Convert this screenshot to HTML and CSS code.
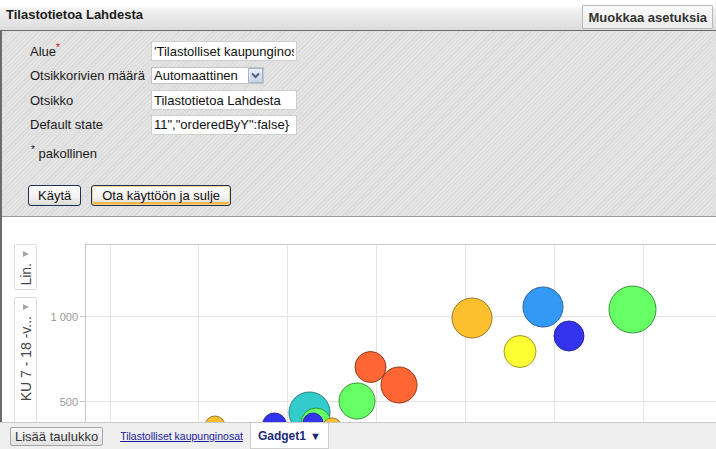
FILE: index.html
```html
<!DOCTYPE html>
<html lang="fi">
<head>
<meta charset="utf-8">
<title>Tilastotietoa Lahdesta</title>
<link rel="stylesheet" href="styles.css">
</head>
<body>
<div class="gadget">
  <header class="titlebar">
    <h1 class="title">Tilastotietoa Lahdesta</h1>
    <button class="edit-btn" type="button">Muokkaa asetuksia</button>
  </header>
  <div class="main">
    <section class="settings">
      <div class="form">
        <label class="lbl">Alue<sup class="req">*</sup></label>
        <div class="field"><input class="txt" type="text" value="'Tilastolliset kaupunginosat'"></div>
        <label class="lbl">Otsikkorivien määrä</label>
        <div class="field">
          <div class="select"><span class="select-val">Automaattinen</span><span class="select-btn"><svg width="9" height="7" viewBox="0 0 9 7"><path d="M1 1.5 L4.5 5 L8 1.5" fill="none" stroke="#4d6185" stroke-width="2"/></svg></span></div>
        </div>
        <label class="lbl">Otsikko</label>
        <div class="field"><input class="txt" type="text" value="Tilastotietoa Lahdesta"></div>
        <label class="lbl">Default state</label>
        <div class="field"><input class="txt" type="text" value='11","orderedByY":false}'></div>
      </div>
      <p class="note"><sup class="star">*</sup> pakollinen</p>
      <div class="actions">
        <button class="btn" type="button">Käytä</button>
        <button class="btn btn-default" type="button">Ota käyttöön ja sulje</button>
      </div>
    </section>
    <section class="chart">
      <div class="side">
        <div class="pill pill-short"><span class="tri"></span><span class="vtext">Lin.</span></div>
        <div class="pill pill-long"><span class="tri"></span><span class="vtext">KU 7 - 18 -v...</span></div>
      </div>
      <svg class="plot" width="676" height="205" viewBox="40 217 676 205">
        <g stroke="#e4e4e4" stroke-width="1">
          <line x1="110.5" y1="244" x2="110.5" y2="422"/>
          <line x1="198.5" y1="244" x2="198.5" y2="422"/>
          <line x1="287.5" y1="244" x2="287.5" y2="422"/>
          <line x1="376.5" y1="244" x2="376.5" y2="422"/>
          <line x1="465.5" y1="244" x2="465.5" y2="422"/>
          <line x1="554.5" y1="244" x2="554.5" y2="422"/>
          <line x1="643.5" y1="244" x2="643.5" y2="422"/>
          <line x1="85" y1="316.5" x2="716" y2="316.5"/>
          <line x1="85" y1="401.5" x2="716" y2="401.5"/>
        </g>
        <g stroke="#c8c8c8" stroke-width="1">
          <line x1="85.5" y1="244" x2="85.5" y2="422"/>
          <line x1="85" y1="244.5" x2="716" y2="244.5"/>
          <line x1="80" y1="316.5" x2="85" y2="316.5"/>
          <line x1="80" y1="401.5" x2="85" y2="401.5"/>
        </g>
        <g class="axis-label" fill="#999999" font-size="11" text-anchor="end">
          <text x="78" y="320.5">1 000</text>
          <text x="78" y="405.5">500</text>
        </g>
        <g stroke-width="1">
          <circle cx="472" cy="318" r="20" fill="#fcbf2e" stroke="#9c7a2c"/>
          <circle cx="543" cy="307" r="20" fill="#3399f7" stroke="#2c63a0"/>
          <circle cx="520" cy="351.5" r="16" fill="#ffff33" stroke="#9c9a2a"/>
          <circle cx="569" cy="336" r="15" fill="#3333ee" stroke="#27279a"/>
          <circle cx="632.5" cy="309.5" r="23.5" fill="#66ff66" stroke="#3a943a"/>
          <circle cx="370.5" cy="367" r="15.5" fill="#ff6633" stroke="#8f3b1c"/>
          <circle cx="399" cy="385" r="18" fill="#ff6633" stroke="#8f3b1c"/>
          <circle cx="357" cy="401" r="18" fill="#66ff66" stroke="#3a943a"/>
          <circle cx="309.5" cy="412.5" r="20.5" fill="#33cccc" stroke="#237f7f"/>
          <circle cx="316" cy="423" r="15" fill="#66ff66" stroke="#3a943a"/>
          <circle cx="313" cy="423" r="10" fill="#3333ee" stroke="#27279a"/>
          <circle cx="332" cy="428" r="10" fill="#fcbf2e" stroke="#9c7a2c"/>
          <circle cx="274.5" cy="425" r="12" fill="#3333ee" stroke="#27279a"/>
          <circle cx="215" cy="426" r="10" fill="#fcbf2e" stroke="#9c7a2c"/>
        </g>
      </svg>
    </section>
  </div>
  <footer class="tabs">
    <button class="add-btn" type="button">Lisää taulukko</button>
    <a class="sheet-link" href="#">Tilastolliset kaupunginosat</a>
    <span class="tab">Gadget1 <span class="caret">▼</span></span>
  </footer>
</div>
</body>
</html>
```

FILE: styles.css
```css
* { box-sizing: border-box; }

html, body {
  margin: 0;
  padding: 0;
  background: #ffffff;
}

body {
  font-family: "Liberation Sans", Arial, sans-serif;
  font-size: 13px;
  color: #111;
  width: 716px;
  height: 449px;
  overflow: hidden;
}

.gadget {
  display: flex;
  flex-direction: column;
  height: 449px;
}

.titlebar {
  height: 31px;
  display: flex;
  align-items: flex-start;
  justify-content: space-between;
  background: linear-gradient(#ffffff 0, #ffffff 6px, #f2f2f2 9px, #dcdcdc 30px);
  border-bottom: 1px solid #6a6a6a;
  padding: 0 3px 0 6px;
}

.title {
  margin: 0;
  font-size: 13px;
  font-weight: bold;
  color: #1e1e1e;
  line-height: 30px;
}

.edit-btn {
  margin-top: 5px;
  height: 24px;
  padding: 0 5px;
  font-family: "Liberation Sans", Arial, sans-serif;
  font-size: 13px;
  font-weight: bold;
  color: #333;
  background: linear-gradient(#fafafa, #ececec);
  border: 1px solid #b9b9b9;
  border-radius: 1px;
}

.main {
  flex: 1;
  display: flex;
  flex-direction: column;
  border-left: 2px solid #6b6b6b;
  min-height: 0;
}

.settings {
  height: 186px;
  padding: 10px 0 0 28px;
  border-bottom: 1px solid #9a9a9a;
  background-color: #e2e2e2;
  background-image: repeating-linear-gradient(135deg, #e4e4e4 0, #e4e4e4 2px, #dadada 2px, #dadada 3px);
}

.form {
  display: grid;
  grid-template-columns: 121px 146px;
  grid-auto-rows: 20px;
  row-gap: 4.5px;
  align-items: center;
}

.lbl {
  font-size: 13px;
  color: #1a1a1a;
  white-space: nowrap;
}

.req {
  color: #d01010;
  font-size: 10px;
  vertical-align: top;
  line-height: 8px;
}

.field {
  display: flex;
  align-items: center;
  height: 20px;
}

.txt {
  width: 146px;
  height: 20px;
  padding: 0 2px;
  border: 1px solid #cfcfcf;
  background: #fff;
  font-family: "Liberation Sans", Arial, sans-serif;
  font-size: 13px;
  color: #111;
  outline: none;
}

.select {
  display: flex;
  align-items: center;
  height: 17px;
  background: #fff;
  border: 1px solid #c2c2c2;
  padding-left: 2px;
}

.select-val {
  font-size: 13px;
  line-height: 15px;
  width: 94px;
}

.select-btn {
  width: 15px;
  height: 15px;
  display: flex;
  align-items: center;
  justify-content: center;
  background: linear-gradient(#e9eef8, #c9d3e6);
  border: 1px solid #a9b6cf;
}

.note {
  margin: 11px 0 0 1px;
  font-size: 13px;
  line-height: 16px;
  color: #1a1a1a;
}

.star {
  font-size: 10px;
  vertical-align: top;
  line-height: 8px;
}

.actions {
  display: flex;
  gap: 10px;
  margin-top: 23px;
  margin-left: -2px;
}

.btn {
  height: 21px;
  padding: 0 9px;
  font-family: "Liberation Sans", Arial, sans-serif;
  font-size: 13px;
  color: #111;
  background: linear-gradient(#ffffff, #f1f1ee 60%, #dcdcd6);
  border: 1px solid #1e2f4f;
  border-radius: 3px;
}

.btn-default {
  box-shadow: inset 0 0 0 1px #f7d68a, inset 0 -2px 0 1px #f0b64a;
  padding: 0 10px;
}

.chart {
  height: 205px;
  display: flex;
  background: #fff;
  overflow: hidden;
}

.side {
  display: flex;
  flex-direction: column;
  gap: 7px;
  padding: 27px 3px 0 12px;
}

.pill {
  width: 23px;
  border: 1px solid #dedede;
  border-radius: 2px;
  display: flex;
  flex-direction: column;
  align-items: center;
  padding-top: 6px;
  background: #fff;
  flex: none;
}

.pill-short { height: 46px; }
.pill-long { height: 140px; }

.tri {
  width: 0;
  height: 0;
  border-top: 3px solid transparent;
  border-bottom: 3px solid transparent;
  border-left: 6px solid #a8a8a8;
  margin-left: 1px;
}

.vtext {
  writing-mode: vertical-rl;
  transform: rotate(180deg);
  font-size: 14px;
  color: #444;
  margin-top: 6px;
  white-space: nowrap;
}

.plot {
  display: block;
  flex: none;
  font-family: "Liberation Sans", Arial, sans-serif;
}

.tabs {
  height: 27px;
  display: flex;
  align-items: center;
  background: #efefef;
  border-top: 1px solid #c9c9c9;
}

.add-btn {
  margin-left: 10px;
  height: 19px;
  padding: 0 4px;
  font-family: "Liberation Sans", Arial, sans-serif;
  font-size: 13px;
  color: #333;
  background: linear-gradient(#f7f7f7, #e3e3e3);
  border: 1px solid #a4a4a4;
  border-radius: 2px;
}

.sheet-link {
  margin-left: 17px;
  font-size: 10.5px;
  color: #1a1a9c;
  text-decoration: underline;
}

.tab {
  margin-left: 7px;
  align-self: stretch;
  display: flex;
  align-items: center;
  gap: 4px;
  padding: 0 7px;
  background: #fff;
  border: 1px solid #cfcfcf;
  border-top: none;
  font-size: 12px;
  font-weight: bold;
  color: #1a2b7c;
}

.caret {
  font-size: 11px;
}
```
